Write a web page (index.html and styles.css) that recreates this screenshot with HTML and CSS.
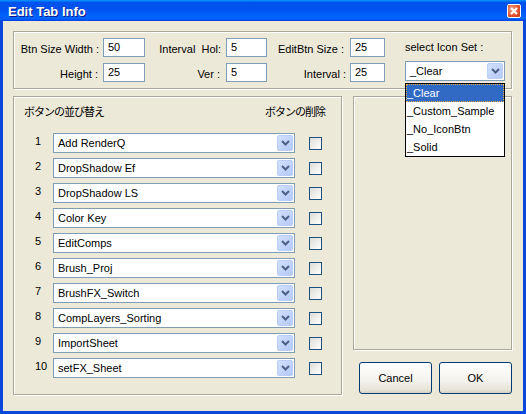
FILE: index.html
```html
<!DOCTYPE html>
<html lang="ja">
<head>
    <meta charset="UTF-8">
    <title>Edit Tab Info</title>
    <link rel="stylesheet" href="styles.css">
</head>
<body>
    <div class="window">
        <div class="titlebar">
            <span class="title">Edit Tab Info</span>
            <span class="close">
                <svg width="8" height="8" viewBox="0 0 8 8"><path d="M1 1l6 6M7 1l-6 6" stroke="#fff" stroke-width="2"/></svg>
            </span>
        </div>
        <div class="frame">
            <!-- ボタンサイズ設定 -->
            <div class="group top-group">
                <div class="fields">
                    <label class="lbl">Btn Size Width :</label>
                    <div class="edit">50</div>
                    <label class="lbl">Interval&nbsp; Hol:</label>
                    <div class="edit">5</div>
                    <label class="lbl">EditBtn Size :</label>
                    <div class="edit">25</div>
                    <span></span>
                    <label class="lbl-set">select Icon Set :</label>

                    <label class="lbl">Height :</label>
                    <div class="edit">25</div>
                    <label class="lbl">Ver :</label>
                    <div class="edit">5</div>
                    <label class="lbl">Interval :</label>
                    <div class="edit">25</div>
                    <span></span>
                    <div class="combo icon-set">
                        <span class="combo-text">_Clear</span>
                        <span class="combo-btn"><svg width="9" height="6" viewBox="0 0 9 6"><path d="M1 1l3.5 3.5L8 1" stroke="#4d6185" stroke-width="2" fill="none"/></svg></span>
                    </div>
                </div>
            </div>

            <div class="main">
                <!-- ボタン一覧 -->
                <div class="group list-group">
                    <div class="list-head">
                        <span class="head-sort">ボタンの並び替え</span>
                        <span>ボタンの削除</span>
                    </div>
                    <div class="rows" id="rows"></div>
                </div>

                <div class="side">
                    <div class="group preview"></div>
                    <div class="buttons">
                        <button class="btn">Cancel</button>
                        <button class="btn">OK</button>
                    </div>
                </div>
            </div>
        </div>

        <ul class="dropdown">
            <li class="selected">_Clear</li>
            <li>_Custom_Sample</li>
            <li>_No_IconBtn</li>
            <li>_Solid</li>
        </ul>
    </div>

    <script>
        const names = ['Add RenderQ', 'DropShadow Ef', 'DropShadow LS', 'Color Key', 'EditComps',
            'Brush_Proj', 'BrushFX_Switch', 'CompLayers_Sorting', 'ImportSheet', 'setFX_Sheet'];
        const rows = document.getElementById('rows');
        names.forEach((name, i) => {
            const row = document.createElement('div');
            row.className = 'row';
            row.innerHTML = `<span class="num">${i + 1}</span>
                <div class="combo">
                    <span class="combo-text">${name}</span>
                    <span class="combo-btn"><svg width="9" height="6" viewBox="0 0 9 6"><path d="M1 1l3.5 3.5L8 1" stroke="#4d6185" stroke-width="2" fill="none"/></svg></span>
                </div>
                <span class="check"></span>`;
            rows.appendChild(row);
        });
    </script>
</body>
</html>
```

FILE: styles.css
```css
body {
    margin: 0;
    font-family: "Liberation Sans", Arial, sans-serif;
    font-size: 11px;
    color: #000;
    background: #ece9d8;
}
.window {
    position: relative;
    width: 526px;
    height: 414px;
    display: flex;
    flex-direction: column;
}
.titlebar {
    height: 21px;
    display: flex;
    align-items: center;
    justify-content: space-between;
    padding: 0 5px 0 8px;
    background: linear-gradient(#0997ff, #0053ee 12%, #0050ee 40%, #0066ff 85%, #005bff 92%, #003dd7);
}
.title {
    color: #fff;
    font-weight: bold;
    font-size: 13px;
    padding-top: 1px;
    text-shadow: 1px 1px #0a1883;
}
.close {
    width: 14px;
    height: 14px;
    box-sizing: border-box;
    border: 1px solid #fff;
    border-radius: 2px;
    background: radial-gradient(circle at 35% 35%, #f0a488, #e0522c 60%, #c23a16);
    display: flex;
    align-items: center;
    justify-content: center;
}
.frame {
    flex: 1;
    border: 3px solid #0a48dc;
    border-top: 0;
    background: #ece9d8;
    padding: 10px 0 0 10px;
}
.group {
    box-sizing: border-box;
    border: 1px solid #aca899;
    box-shadow: inset 1px 1px #fff, 1px 1px #fff;
}
.top-group {
    width: 499px;
    height: 58px;
}
.fields {
    display: grid;
    grid-template-columns: 89px 42px 81px 41px 83px 35px 20px 100px;
    grid-template-rows: 19px 19px;
    row-gap: 6px;
    padding-top: 6px;
}
.lbl {
    text-align: right;
    padding-right: 4px;
    padding-top: 5px;
    line-height: 13px;
}
.fields .lbl:nth-of-type(2), .fields .lbl:nth-of-type(5) {
    padding-right: 5px;
}
.fields .lbl:nth-of-type(3), .fields .lbl:nth-of-type(6) {
    padding-right: 6px;
}
.lbl-set {
    padding-top: 3px;
    line-height: 13px;
    white-space: nowrap;
}
.edit {
    box-sizing: border-box;
    border: 1px solid #7f9db9;
    background: #fff;
    padding-left: 4px;
    line-height: 17px;
}
.combo {
    box-sizing: border-box;
    width: 242px;
    height: 20px;
    display: flex;
    align-items: center;
    border: 1px solid #7f9db9;
    background: #fff;
}
.combo.icon-set {
    width: 100px;
    margin-top: -2px;
}
.combo-text {
    flex: 1;
    padding-left: 4px;
    line-height: 18px;
    white-space: nowrap;
}
.combo-btn {
    box-sizing: border-box;
    width: 16px;
    height: 16px;
    margin-right: 1px;
    border: 1px solid #b9cdf8;
    border-radius: 2px;
    background: linear-gradient(135deg, #d2e0fd, #b4c9f7);
    display: flex;
    align-items: center;
    justify-content: center;
}
.main {
    display: flex;
    margin-top: 7px;
}
.list-group {
    width: 329px;
    height: 299px;
}
.list-head {
    display: flex;
    padding: 7px 0 0 10px;
    line-height: 14px;
    font-family: "Noto Sans CJK JP", sans-serif;
    font-size: 11px;
    letter-spacing: -1px;
}
.head-sort {
    width: 241px;
}
.rows {
    margin-top: 15px;
}
.row {
    display: flex;
    align-items: center;
    height: 20px;
    margin-bottom: 5px;
    padding-left: 21px;
}
.num {
    width: 18px;
    align-self: flex-start;
    padding-top: 2px;
    line-height: 13px;
}
.check {
    box-sizing: border-box;
    width: 13px;
    height: 13px;
    margin-left: 14px;
    border: 1px solid #1c5180;
    background: linear-gradient(135deg, #dcdcd7, #fff);
}
.side {
    margin-left: 11px;
    display: flex;
    flex-direction: column;
}
.preview {
    width: 159px;
    height: 254px;
}
.buttons {
    display: flex;
    gap: 7px;
    margin-top: 12px;
    padding-left: 6px;
}
.btn {
    width: 73px;
    height: 32px;
    border: 1px solid #003c74;
    border-radius: 3px;
    background: linear-gradient(#fff, #f3f2ec 60%, #e6e3d6 90%, #d6d0c5);
    font-family: "Liberation Sans", Arial, sans-serif;
    font-size: 11px;
    color: #000;
    padding: 0;
}
.dropdown {
    position: absolute;
    left: 405px;
    top: 83px;
    width: 100px;
    box-sizing: border-box;
    margin: 0;
    padding: 0;
    list-style: none;
    border: 1px solid #000;
    background: #fff;
}
.dropdown li {
    height: 18px;
    line-height: 18px;
    padding-left: 1px;
    box-sizing: border-box;
}
.dropdown li.selected {
    background: #316ac5;
    color: #fff;
    outline: 1px dotted #f0b040;
    outline-offset: -1px;
}
```
